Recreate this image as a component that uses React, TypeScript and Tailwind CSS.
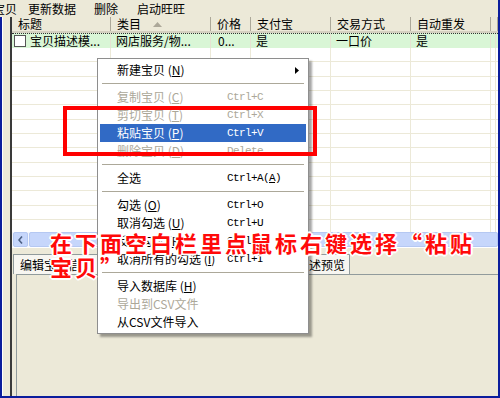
import React from "react";

type MenuItem =
  | { sep: true }
  | {
      sep?: false;
      label: string;
      mnemonic?: string;
      shortcut?: React.ReactNode;
      disabled?: boolean;
      active?: boolean;
      arrow?: boolean;
    };

const menuItems: MenuItem[] = [
  { label: "新建宝贝", mnemonic: "N", arrow: true },
  { sep: true },
  { label: "复制宝贝", mnemonic: "C", shortcut: "Ctrl+C", disabled: true },
  { label: "剪切宝贝", mnemonic: "T", shortcut: "Ctrl+X", disabled: true },
  { label: "粘贴宝贝", mnemonic: "P", shortcut: "Ctrl+V", active: true },
  { label: "删除宝贝", mnemonic: "D", shortcut: "Delete", disabled: true },
  { sep: true },
  {
    label: "全选",
    shortcut: (
      <>
        Ctrl+A(<span className="underline">A</span>)
      </>
    ),
  },
  { sep: true },
  { label: "勾选", mnemonic: "O", shortcut: "Ctrl+O" },
  { label: "取消勾选", mnemonic: "U", shortcut: "Ctrl+U" },
  { label: "反向勾选", mnemonic: "R", shortcut: "Ctrl+R" },
  { label: "取消所有的勾选", mnemonic: "I", shortcut: "Ctrl+I" },
  { sep: true },
  { label: "导入数据库", mnemonic: "H" },
  { label: "导出到CSV文件", disabled: true },
  { label: "从CSV文件导入" },
];

// header / body columns (widths add up to the 484px list)
const columns = [
  { title: "标题", cls: "w-[99px]" },
  { title: "类目", cls: "w-[100px]", sort: true },
  { title: "价格", cls: "w-[40px]" },
  { title: "支付宝", cls: "w-[80px]" },
  { title: "交易方式", cls: "w-[80px]" },
  { title: "自动重发", cls: "w-[80px]" },
  { title: "", cls: "w-[5px]" },
];

const emptyRows = Array.from({ length: 13 });

function ContextMenu() {
  return (
    <div className="absolute left-[97px] top-[58px] w-[212px] border border-[#8e8e8e] bg-white p-[2px] shadow-[3px_3px_2px_rgba(0,0,0,0.35)]">
      {menuItems.map((item, i) =>
        item.sep ? (
          <div key={i} className="flex h-[9px] items-center px-[2px]">
            <div className="h-px w-full bg-[#aca899]" />
          </div>
        ) : (
          <div
            key={i}
            className={`relative flex h-[18px] items-center pl-[17px] ${
              item.active ? "bg-[#316ac5] text-white" : item.disabled ? "text-[#aca899]" : "text-black"
            }`}
          >
            <span className="w-[110px] whitespace-nowrap">
              {item.label}
              {item.mnemonic && (
                <>
                  {" "}(<span className="underline">{item.mnemonic}</span>)
                </>
              )}
            </span>
            {item.shortcut && (
              <span className="font-['Liberation_Mono',monospace] text-[11px] tracking-[-0.6px]">{item.shortcut}</span>
            )}
            {item.arrow && (
              <svg className="absolute right-[7px] top-[6px]" width="4" height="7" viewBox="0 0 4 7">
                <path d="M0 0 L4 3.5 L0 7 Z" fill="#000" />
              </svg>
            )}
          </div>
        )
      )}
    </div>
  );
}

export default function App() {
  return (
    <div className="relative flex h-[398px] w-[500px] flex-col overflow-hidden bg-[#0b1d9c] font-['Noto_Sans_CJK_SC',sans-serif] text-[12px] leading-none text-black">
      {/* menu bar */}
      <div className="mr-[2px] flex h-[17px] shrink-0 items-center bg-[#ece9d8] whitespace-nowrap">
        <span className="-ml-[7px]">宝贝</span>
        <span className="ml-[11px]">更新数据</span>
        <span className="ml-[18px]">删除</span>
        <span className="ml-[19px]">启动旺旺</span>
      </div>

      <div className="mx-[2px] mb-[2px] flex flex-1 bg-[#ece9d8]">
        <div className="w-[10px] border-l border-white" />
        <div className="flex flex-1 flex-col border-l-2 border-[#3a3a3a]">
          {/* list */}
          <div className="flex h-[231px] flex-col bg-white">
            <div className="flex h-[16px] shrink-0 border-b-2 border-[#d4d0c0] bg-[#ece9d8]">
              {columns.map((c, i) => (
                <div
                  key={i}
                  className={`relative flex items-center border-r border-[#aca899] pl-[6px] whitespace-nowrap ${c.cls}`}
                >
                  {c.title}
                  {c.sort && (
                    <svg className="absolute left-[42px] top-[5px]" width="9" height="5" viewBox="0 0 9 5">
                      <path d="M4.5 0 L9 5 L0 5 Z" fill="#aca899" />
                    </svg>
                  )}
                </div>
              ))}
            </div>
            <div className="h-[199px] overflow-hidden">
              <div className="flex h-[15px] border-t border-dotted border-[#333] bg-[#d9f6d6]">
                {columns.map((c, i) => (
                  <div key={i} className={`flex items-center border-r border-[#e6e3d3] whitespace-nowrap ${c.cls}`}>
                    {i === 0 && (
                      <>
                        <span className="ml-[2px] mr-[4px] h-[12px] w-[12px] border border-[#555] bg-white" />
                        宝贝描述模...
                      </>
                    )}
                    {i === 1 && <span className="pl-[5px]">网店服务/物...</span>}
                    {i === 2 && <span className="pl-[7px]">0...</span>}
                    {i === 3 && <span className="pl-[5px]">是</span>}
                    {i === 4 && <span className="pl-[5px]">一口价</span>}
                    {i === 5 && <span className="pl-[5px]">是</span>}
                  </div>
                ))}
              </div>
              {emptyRows.map((_, r) => (
                <div key={r} className="flex h-[14.33px] border-b border-[#ece9d8]">
                  {columns.map((c, i) => (
                    <div key={i} className={`border-r border-[#ece9d8] ${c.cls}`} />
                  ))}
                </div>
              ))}
            </div>
            {/* horizontal scrollbar */}
            <div className="flex h-[15px] shrink-0 bg-[#f3f6fd] pl-[1px]">
              <div className="flex w-[15px] items-center justify-center rounded-[2px] border border-[#b5c8f2] bg-[#c6d6fb]">
                <svg width="5" height="8" viewBox="0 0 5 8">
                  <path d="M4 0.5 L1 4 L4 7.5" stroke="#4d6185" strokeWidth="1.6" fill="none" />
                </svg>
              </div>
              <div className="ml-[1px] flex-1 rounded-[2px] border border-[#b5c8f2] bg-[#c6d6fb]" />
            </div>
          </div>

          {/* tabs */}
          <div className="mt-[6px] flex h-[20px] pl-[1px]">
            {["编辑宝贝信息", "宝贝销售属性", "宝贝描述编辑", "宝贝描述预览"].map((t, i) => (
              <div
                key={t}
                className={`flex items-center border border-b-0 border-[#919b9c] bg-[#f7f6f1] pl-[6px] whitespace-nowrap ${
                  ["w-[88px]", "w-[82px]", "w-[83px]", "w-[84px]"][i]
                }`}
              >
                {t}
              </div>
            ))}
          </div>
          <div className="ml-[4px] flex-1 border-l border-t border-[#919b9c] bg-[#ece9d8]" />
        </div>
      </div>

      <ContextMenu />

      {/* red highlight box */}
      <div className="absolute left-[63px] top-[106px] h-[50px] w-[254px] border-4 border-[#ff0000]" />

      {/* red caption */}
      <div className="absolute left-[50px] top-[230px] whitespace-nowrap text-[22px] font-bold leading-[24px] tracking-[3px] text-[#ff0a0a] [text-shadow:-2px_0_#fff,2px_0_#fff,0_-2px_#fff,0_2px_#fff,-1px_-1px_#fff,1px_1px_#fff,-1px_1px_#fff,1px_-1px_#fff]">
        在下面空白栏里点鼠标右键选择“粘贴
        <br />
        宝贝”
      </div>
    </div>
  );
}
